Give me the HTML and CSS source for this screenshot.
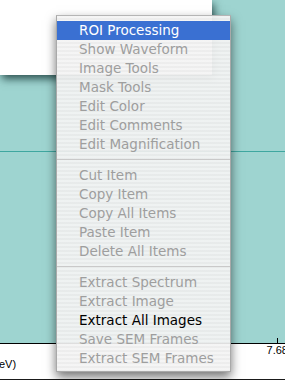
FILE: index.html
```html
<!DOCTYPE html>
<html>
<head>
<meta charset="utf-8">
<link rel="stylesheet" href="styles.css">
</head>
<body>
<div class="desk">
  <div class="panel"></div>
  <div class="plot">
    <div class="grid-line"></div>
  </div>
  <div class="axis">
    <span class="unit">eV)</span>
    <span class="tick-label"><span class="tick"></span>7.68</span>
  </div>
</div>
<ul class="menu">
  <li class="item selected">ROI Processing</li>
  <li class="item">Show Waveform</li>
  <li class="item">Image Tools</li>
  <li class="item">Mask Tools</li>
  <li class="item">Edit Color</li>
  <li class="item">Edit Comments</li>
  <li class="item">Edit Magnification</li>
  <li class="sep"></li>
  <li class="item">Cut Item</li>
  <li class="item">Copy Item</li>
  <li class="item">Copy All Items</li>
  <li class="item">Paste Item</li>
  <li class="item">Delete All Items</li>
  <li class="sep"></li>
  <li class="item">Extract Spectrum</li>
  <li class="item">Extract Image</li>
  <li class="item enabled">Extract All Images</li>
  <li class="item">Save SEM Frames</li>
  <li class="item">Extract SEM Frames</li>
</ul>
</body>
</html>
```
FILE: styles.css
```css
html, body {
  margin: 0;
  padding: 0;
}
body {
  width: 285px;
  height: 380px;
  overflow: hidden;
  position: relative;
  background: #9ed4d0;
  font-family: "DejaVu Sans", "Liberation Sans", sans-serif;
}
.desk {
  display: flex;
  flex-direction: column;
  height: 380px;
}
.panel {
  width: 212px;
  height: 75px;
  background: #ffffff;
  box-shadow: 2px 4px 8px rgba(10, 40, 40, 0.75);
  position: relative;
  z-index: 1;
}
.plot {
  flex: 1;
  display: flex;
  flex-direction: column;
  padding-top: 76px;
}
.grid-line {
  height: 1px;
  background: #3fa7a0;
}
.axis {
  height: 35px;
  background: #ffffff;
  border-top: 1px solid #000000;
  border-bottom: 1px solid #1a1a1a;
  display: flex;
  justify-content: space-between;
  align-items: flex-start;
  font-family: "Liberation Sans", Arial, sans-serif;
  font-size: 11px;
  color: #000;
}
.unit {
  margin-top: 14px;
  margin-left: -1px;
}
.tick-label {
  display: flex;
  flex-direction: column;
  align-items: center;
  margin-right: -3px;
  margin-top: -6px;
}
.tick {
  width: 1px;
  height: 5px;
  background: #000;
  margin-bottom: 1px;
}
.menu {
  position: absolute;
  z-index: 5;
  left: 56px;
  top: 15px;
  width: 173px;
  margin: 0;
  padding: 5px 0 3px;
  list-style: none;
  border: 1px solid #a9a9a9;
  border-top-color: #b5b5b5;
  background: repeating-linear-gradient(to bottom,
    rgba(244, 244, 244, 0.94) 0px, rgba(244, 244, 244, 0.94) 2px,
    rgba(236, 236, 236, 0.94) 2px, rgba(236, 236, 236, 0.94) 4px);
  box-shadow: 0 5px 10px rgba(0, 0, 0, 0.55);
}
.item {
  height: 19px;
  line-height: 19px;
  padding-left: 22px;
  font-size: 13.5px;
  color: #9e9e9e;
  white-space: nowrap;
}
.item.selected {
  background: #3a70d2;
  color: #ffffff;
}
.item.enabled {
  color: #000000;
}
.sep {
  height: 1px;
  margin: 5px 0 6px;
  background: #c9c9c9;
}
```
